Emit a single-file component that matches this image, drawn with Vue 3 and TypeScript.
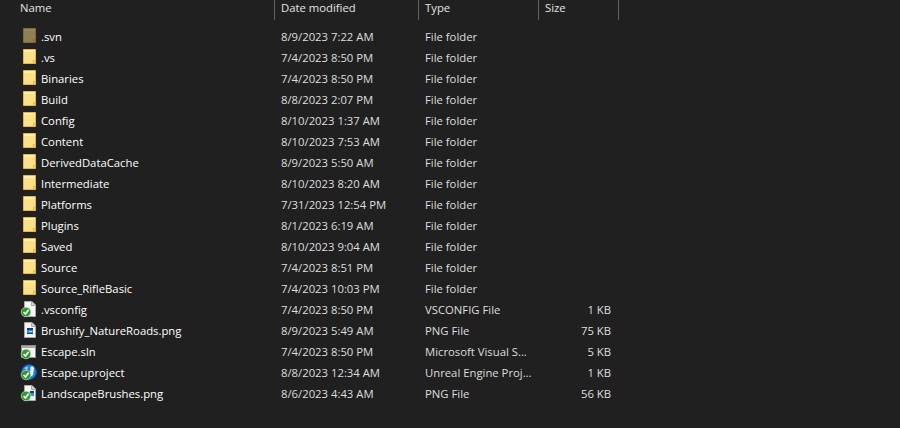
<script setup lang="ts">
type Icon = 'folder' | 'svn' | 'cfg' | 'png' | 'sln' | 'ue' | 'lsc'
interface Row { name: string; date: string; type: string; size: string; icon: Icon }
const folder = (name: string, date: string, icon: Icon = 'folder'): Row => ({ name, date, type: 'File folder', size: '', icon })
const rows: Row[] = [
  folder('.svn', '8/9/2023 7:22 AM', 'svn'),
  folder('.vs', '7/4/2023 8:50 PM'),
  folder('Binaries', '7/4/2023 8:50 PM'),
  folder('Build', '8/8/2023 2:07 PM'),
  folder('Config', '8/10/2023 1:37 AM'),
  folder('Content', '8/10/2023 7:53 AM'),
  folder('DerivedDataCache', '8/9/2023 5:50 AM'),
  folder('Intermediate', '8/10/2023 8:20 AM'),
  folder('Platforms', '7/31/2023 12:54 PM'),
  folder('Plugins', '8/1/2023 6:19 AM'),
  folder('Saved', '8/10/2023 9:04 AM'),
  folder('Source', '7/4/2023 8:51 PM'),
  folder('Source_RifleBasic', '7/4/2023 10:03 PM'),
  { name: '.vsconfig', date: '7/4/2023 8:50 PM', type: 'VSCONFIG File', size: '1 KB', icon: 'cfg' },
  { name: 'Brushify_NatureRoads.png', date: '8/9/2023 5:49 AM', type: 'PNG File', size: '75 KB', icon: 'png' },
  { name: 'Escape.sln', date: '7/4/2023 8:50 PM', type: 'Microsoft Visual S...', size: '5 KB', icon: 'sln' },
  { name: 'Escape.uproject', date: '8/8/2023 12:34 AM', type: 'Unreal Engine Proj...', size: '1 KB', icon: 'ue' },
  { name: 'LandscapeBrushes.png', date: '8/6/2023 4:43 AM', type: 'PNG File', size: '56 KB', icon: 'lsc' },
]
const hasCheck = (i: Icon) => i === 'cfg' || i === 'sln' || i === 'ue' || i === 'lsc'
const isFolder = (i: Icon) => i === 'folder' || i === 'svn'
const isPage = (i: Icon) => i === 'cfg' || i === 'png' || i === 'lsc'
</script>

<template>
  <div class="explorer">
    <div class="head">
      <div class="h name">Name</div>
      <div class="h date">Date modified</div>
      <div class="h type">Type</div>
      <div class="h size">Size</div>
    </div>
    <div class="list">
      <div v-for="r in rows" :key="r.name" class="row">
        <svg class="ico" width="20" height="17" viewBox="0 0 20 17">
          <g v-if="isFolder(r.icon)" :opacity="r.icon === 'svn' ? 0.5 : 1">
            <path d="M3.5 .5H15.5V14.5H3.5Z" fill="#fbe08a" stroke="#e6b640" />
            <path d="M13.5 14.5V11.5H15.5" fill="#f5cf66" stroke="#e6b640" />
            <rect x="4" y="1" width="11" height="2" fill="#ffeeb0" />
          </g>
          <g v-if="isPage(r.icon)">
            <path d="M4.5 .5H12L15.5 4V15.5H4.5Z" fill="#f7f7f7" stroke="#a8a8a8" />
            <path d="M11.5 .5V4.5H15.5" fill="#cfcfcf" stroke="#a8a8a8" />
            <g v-if="r.icon === 'png'">
              <rect x="7" y="6" width="6" height="6" fill="#123f86" />
              <rect x="7" y="8" width="6" height="3" fill="#2f8fe0" />
              <rect x="9" y="9" width="3" height="1" fill="#a6d8f5" />
            </g>
            <g v-if="r.icon === 'lsc'">
              <rect x="10" y="6" width="4" height="5" fill="#2f8fe0" />
              <rect x="10" y="6" width="4" height="2" fill="#123f86" />
            </g>
          </g>
          <g v-if="r.icon === 'sln'">
            <rect x="1.5" y="2.5" width="14" height="12" fill="#f4f4f4" stroke="#8f8f8f" />
            <rect x="2" y="3" width="13" height="2" fill="#a9a9a9" />
          </g>
          <g v-if="r.icon === 'ue'">
            <circle cx="9" cy="8" r="7.5" fill="#1f7fe0" stroke="#0f4e9c" />
            <path d="M10.5 3 12.5 2 14 4 13 11 10 13Z" fill="#f2f6fb" />
            <path d="M4 4 8 2.5 7 6Z" fill="#a8cff3" />
          </g>
          <g v-if="hasCheck(r.icon)">
            <circle cx="6" cy="11" r="4.8" fill="#2c9a2e" stroke="#d9ecd9" stroke-width=".6" />
            <path d="M3.6 11 5.5 13 8.6 8.8" fill="none" stroke="#fff" stroke-width="1.7" />
          </g>
        </svg>
        <span class="c-name">{{ r.name }}</span>
        <span class="c-date">{{ r.date }}</span>
        <span class="c-type">{{ r.type }}</span>
        <span class="c-size">{{ r.size }}</span>
      </div>
    </div>
  </div>
</template>

<style>
html, body { margin: 0; background: #202020; }
</style>

<style scoped>
.explorer {
  width: 900px;
  height: 428px;
  background: #202020;
  color: #fff;
  font: 11.3px/21px "Open Sans", "Noto Sans", sans-serif;
  overflow: hidden;
}
.head {
  display: flex;
  height: 20px;
  color: #e4e4e4;
}
.h {
  height: 20px;
  line-height: 16px;
  padding-left: 6px;
  box-sizing: border-box;
  border-right: 1px solid #636363;
}
.name { width: 275px; padding-left: 20px; }
.date { width: 144px; }
.type { width: 120px; }
.size { width: 80px; }
.list { padding-top: 6px; }
.row { display: flex; height: 21px; align-items: center; }
.ico { width: 20px; margin-left: 20px; flex: none; }
.c-name { width: 240px; margin-left: 1px; flex: none; white-space: nowrap; }
.c-date { width: 144px; flex: none; color: #dedede; }
.c-type { width: 120px; flex: none; color: #dedede; white-space: nowrap; }
.c-size { width: 66px; flex: none; text-align: right; color: #dedede; }
</style>
